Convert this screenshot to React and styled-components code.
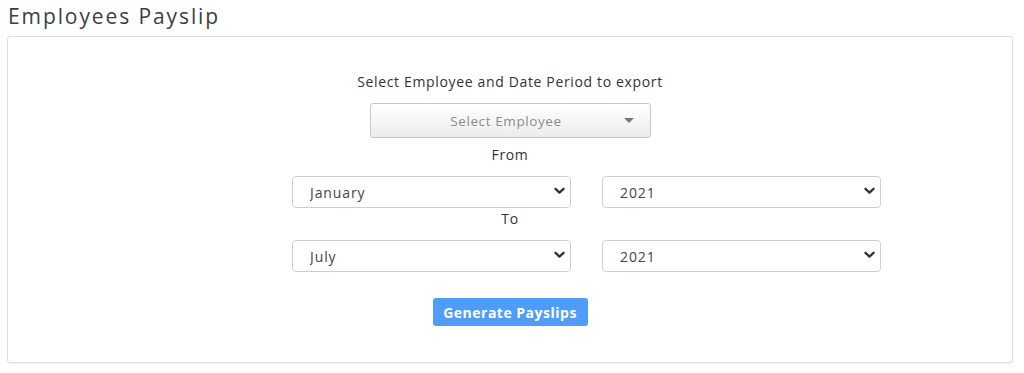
import React from "react";
import styled, { createGlobalStyle } from "styled-components";

const Global = createGlobalStyle`
  html, body { margin: 0; padding: 0; background: #fff; }
  body { font-family: "Open Sans", "Liberation Sans", sans-serif; color: #333; }
  * { box-sizing: border-box; }
`;

const Page = styled.div`
  width: 1024px;
  height: 373px;
  padding: 0 11px 0 7px;
`;

const Title = styled.h1`
  margin: 0;
  height: 36px;
  padding: 3px 0 0 1px;
  font-size: 21px;
  line-height: 26px;
  font-weight: 400;
  color: #3a3f44;
  letter-spacing: 1.9px;
`;

const Card = styled.div`
  border: 1px solid #dedede;
  border-radius: 3px;
  box-shadow: 0 1px 2px rgba(0, 0, 0, 0.06);
  background: #fff;
  height: 327px;
  padding-top: 35px;
  display: flex;
  flex-direction: column;
  align-items: center;
`;

const Label = styled.div`
  font-size: 14px;
  line-height: 20px;
  color: #333;
  margin-top: ${(p) => p.$mt || 0}px;
  letter-spacing: 0.65px;
`;

const EmployeePicker = styled.div`
  margin-top: 11px;
  width: 281px;
  height: 35px;
  border: 1px solid #c8c8c8;
  border-radius: 3px;
  background: linear-gradient(#ffffff, #ececec);
  position: relative;
  display: flex;
  align-items: center;
  justify-content: center;
  font-size: 13.5px;
  letter-spacing: 0.6px;
  color: #8c8c8c;
  padding-right: 8px;
`;

const Caret = styled.span`
  position: absolute;
  right: 16px;
  top: 14px;
  width: 0;
  height: 0;
  border-left: 5px solid transparent;
  border-right: 5px solid transparent;
  border-top: 5px solid #777;
`;

const Row = styled.div`
  margin-top: ${(p) => p.$mt}px;
  align-self: stretch;
  padding-left: 284px;
  display: flex;
  gap: 31px;
`;

const SelectWrap = styled.div`
  position: relative;
  width: 279px;
  height: 32px;
`;

const Select = styled.select`
  appearance: none;
  -webkit-appearance: none;
  width: 100%;
  height: 100%;
  border: 1px solid #cfcfcf;
  border-radius: 4px;
  background: #fff;
  font-family: "Open Sans", "Liberation Sans", sans-serif;
  font-size: 14px;
  letter-spacing: 0.9px;
  color: #444;
  padding: 0 30px 0 17px;
  outline: none;
`;

const Chevron = styled.svg`
  position: absolute;
  right: 6px;
  top: 11px;
  pointer-events: none;
`;

const Button = styled.button`
  margin-top: 26px;
  width: 155px;
  height: 28px;
  border: none;
  border-radius: 3px;
  background: #4f9df6;
  color: #fff;
  font-family: "Open Sans", "Liberation Sans", sans-serif;
  font-weight: 700;
  font-size: 14px;
  letter-spacing: 0.5px;
  padding: 0;
`;

const months = ["January","February","March","April","May","June","July","August","September","October","November","December"];

function DropDown({ value, options }) {
  return (
    <SelectWrap>
      <Select defaultValue={value}>
        {options.map((o) => (
          <option key={o} value={o}>{o}</option>
        ))}
      </Select>
      <Chevron width="11" height="8" viewBox="0 0 11 8">
        <path d="M1.5 1.8 L5.5 5.6 L9.5 1.8" fill="none" stroke="#333" strokeWidth="2.3" strokeLinecap="round" strokeLinejoin="round" />
      </Chevron>
    </SelectWrap>
  );
}

export default function App() {
  const years = ["2019", "2020", "2021", "2022"];
  return (
    <Page>
      <Global />
      <Title>Employees Payslip</Title>
      <Card>
        <Label>Select Employee and Date Period to export</Label>
        <EmployeePicker>
          Select Employee
          <Caret />
        </EmployeePicker>
        <Label $mt={7}>From</Label>
        <Row $mt={11}>
          <DropDown value="January" options={months} />
          <DropDown value="2021" options={years} />
        </Row>
        <Label $mt={1}>To</Label>
        <Row $mt={11}>
          <DropDown value="July" options={months} />
          <DropDown value="2021" options={years} />
        </Row>
        <Button>Generate Payslips</Button>
      </Card>
    </Page>
  );
}
